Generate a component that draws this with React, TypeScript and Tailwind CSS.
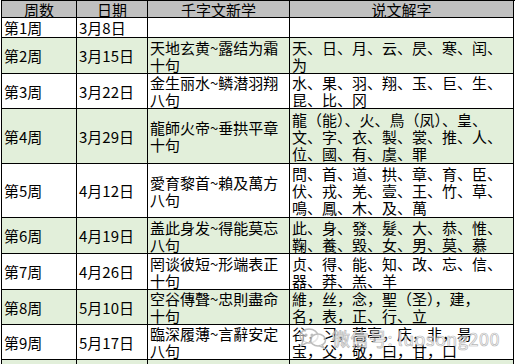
import React from 'react';

type Row = {
  week: string;
  date: string;
  text: string[];
  chars: string[];
  green: boolean;
};

const rows: Row[] = [
  { week: '第1周', date: '3月8日', text: [], chars: [], green: false },
  { week: '第2周', date: '3月15日', text: ['天地玄黄~露结为霜', '十句'], chars: ['天、日、月、云、昃、寒、闰、', '为'], green: true },
  { week: '第3周', date: '3月22日', text: ['金生丽水~鳞潜羽翔', '八句'], chars: ['水、果、羽、翔、玉、巨、生、', '昆、比、冈'], green: false },
  {
    week: '第4周',
    date: '3月29日',
    text: ['龍師火帝~垂拱平章', '十句'],
    chars: ['龍（能）、火、鳥（凤）、皇、', '文、字、衣、製、裳、推、人、', '位、國、有、虞、罪'],
    green: true,
  },
  {
    week: '第5周',
    date: '4月12日',
    text: ['愛育黎首~賴及萬方', '八句'],
    chars: ['問、首、道、拱、章、育、臣、', '伏、戎、羌、壹、王、竹、草、', '鳴、鳳、木、及、萬'],
    green: false,
  },
  { week: '第6周', date: '4月19日', text: ['盖此身发~得能莫忘', '八句'], chars: ['此、身、發、髮、大、恭、惟、', '鞠、養、毀、女、男、莫、慕'], green: true },
  { week: '第7周', date: '4月26日', text: ['罔谈彼短~形端表正', '十句'], chars: ['贞、得、能、知、改、忘、信、', '器、莽、羔、羊'], green: false },
  { week: '第8周', date: '5月10日', text: ['空谷傳聲~忠則盡命', '十句'], chars: ['維，丝，念，聖（圣），建，', '名，表，正、行、立'], green: true },
  { week: '第9周', date: '5月17日', text: ['臨深履薄~言辭安定', '八句'], chars: ['谷，习，蒿亭，庆，非，昜', '宝，父，敬，曰，甘，口'], green: false },
  { week: '', date: '', text: [], chars: [], green: true },
];

function Cell({ lines, bg }: { lines: string[]; bg: string }) {
  return (
    <div className={`border-r border-b border-black ${bg} flex flex-col justify-center pl-[2px] overflow-hidden`}>
      {lines.map((l, i) => (
        <div key={i} className="whitespace-nowrap leading-[17px]">
          {l}
        </div>
      ))}
    </div>
  );
}

function Head({ label }: { label: string }) {
  return (
    <div className="border-r border-b border-black bg-[#c0c0c0] flex items-center justify-center leading-none">
      {label}
    </div>
  );
}

export default function App() {
  return (
    <div
      className="relative w-[515px] h-[364px] overflow-hidden bg-white text-[15px] text-black"
      style={{ fontFamily: "'Noto Sans CJK SC', 'Noto Sans', sans-serif" }}
    >
      <div className="ml-[1px] w-[514px] border-l border-t border-black grid grid-cols-[75px_71px_142px_224px] grid-rows-[17px_20px_36px_35px_55px_54px_36px_36px_35px_35px_20px]">
        <Head label="周数" />
        <Head label="日期" />
        <Head label="千字文新学" />
        <Head label="说文解字" />
        {rows.map((r, i) => {
          const bg = r.green ? 'bg-[#e2efda]' : 'bg-white';
          return (
            <React.Fragment key={i}>
              <Cell lines={r.week ? [r.week] : []} bg={bg} />
              <Cell lines={r.date ? [r.date] : []} bg={bg} />
              <Cell lines={r.text} bg={bg} />
              <Cell lines={r.chars} bg={bg} />
            </React.Fragment>
          );
        })}
      </div>

      {/* watermark */}
      <div className="absolute left-[298px] top-[327px] flex items-center gap-[4px] opacity-90">
        <svg width="30" height="22" viewBox="0 0 30 22" fill="none" stroke="#b8b8b8" strokeWidth="1.6">
          <ellipse cx="11" cy="9" rx="9" ry="7" fill="white" fillOpacity="0.6" />
          <path d="M5 14 L3 19 L9 15.5" fill="white" />
          <ellipse cx="20" cy="13" rx="7.5" ry="6" fill="white" fillOpacity="0.6" />
          <path d="M24 18 L26 21 L21 18.5" fill="white" />
          <circle cx="8" cy="8" r="0.8" fill="#b8b8b8" />
          <circle cx="14" cy="8" r="0.8" fill="#b8b8b8" />
        </svg>
        <span
          className="text-[18px] leading-[20px] tracking-[0.5px]"
          style={{ WebkitTextStroke: '0.7px #b0b0b0', color: 'rgba(255,255,255,0.65)' }}
        >
          微信号: luosong200
        </span>
      </div>
    </div>
  );
}
